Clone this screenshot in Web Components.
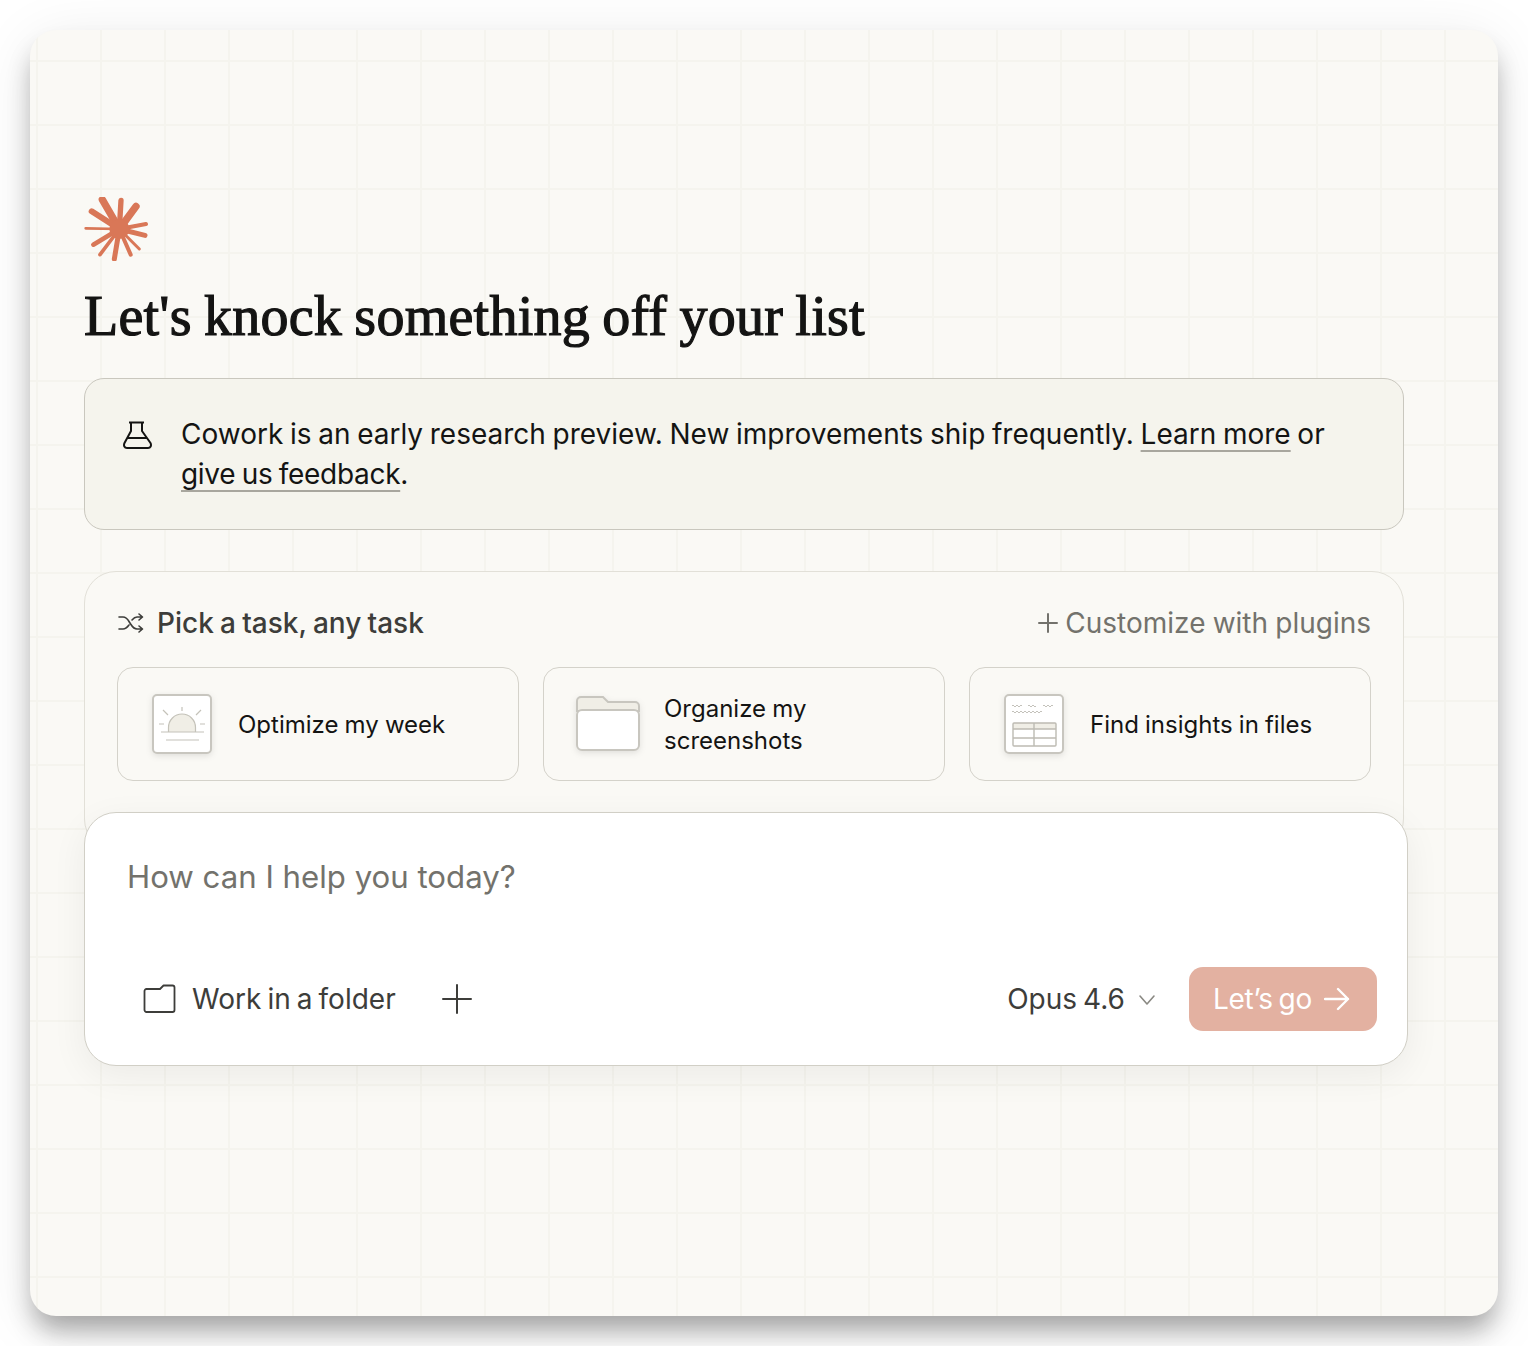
<!DOCTYPE html>
<html lang="en">
<head>
<meta charset="utf-8">
<title>Cowork</title>
<style>
  html, body { margin: 0; background: #fff; }
  body { padding-bottom: 30px; overflow: hidden; font-family: Inter, "Liberation Sans", sans-serif; }
</style>
</head>
<body>
<cw-window>
  <cw-burst></cw-burst>
  <cw-heading>Let's knock something off your list</cw-heading>
  <cw-banner>Cowork is an early research preview. New improvements ship frequently. <a>Learn more</a> or <a>give us feedback</a>.</cw-banner>
  <cw-tasks>
    <cw-task-card icon="sun">Optimize my week</cw-task-card>
    <cw-task-card icon="folder">Organize my<br>screenshots</cw-task-card>
    <cw-task-card icon="sheet">Find insights in files</cw-task-card>
  </cw-tasks>
  <cw-prompt></cw-prompt>
</cw-window>

<script>
const FONT = 'Inter, "Liberation Sans", sans-serif';

class CwWindow extends HTMLElement {
  constructor() {
    super();
    this.attachShadow({mode: 'open'}).innerHTML = `
      <style>
        :host {
          display: block;
          box-sizing: border-box;
          width: 1468px;
          height: 1286px;
          margin: 30px 30px 0;
          padding: 163px 94px 0 54px;
          border-radius: 26px;
          color: #141413;
          background-color: #faf9f5;
          background-image:
            linear-gradient(90deg, #f5f4ee 2px, transparent 2px),
            linear-gradient(#f5f4ee 2px, transparent 2px);
          background-size: 64px 64px;
          background-position: 6px 30px;
          box-shadow: 0 18px 26px -4px rgba(0, 0, 0, .32), 0 10px 60px rgba(0, 0, 0, .09);
        }
      </style>
      <slot></slot>
    `;
  }
}

class CwBurst extends HTMLElement {
  constructor() {
    super();
    // rays measured from the reference, center to tip
    const rays = [
      [97, 60, 22], [153, 62, 16], [198, 80, 22], [228, 133, 12], [225, 167, 15], [208, 208, 9],
      [182, 225, 12], [133, 238, 15], [90, 225, 11], [70, 195, 14], [47, 146, 8], [65, 95, 18]
    ];
    const lines = rays.map(([x, y, w]) => `<line x1="148" y1="148" x2="${x}" y2="${y}" stroke-width="${w}"/>`).join('');
    this.attachShadow({mode: 'open'}).innerHTML = `
      <style>
        :host { display: block; width: 64px; height: 64px; margin-top: 4px; }
        svg { display: block; }
      </style>
      <svg width="64" height="64" viewBox="42 52 192 192" fill="none" stroke="#d97757" stroke-linecap="round">
        ${lines}
        <circle cx="148" cy="148" r="30" fill="#d97757" stroke="none"/>
      </svg>
    `;
  }
}

class CwHeading extends HTMLElement {
  constructor() {
    super();
    this.attachShadow({mode: 'open'}).innerHTML = `
      <style>
        :host {
          display: block;
          margin: 22px 0 29px;
          font: 400 56px/66px "Liberation Serif", serif;
          letter-spacing: .25px;
          word-spacing: -2px;
          -webkit-text-stroke: 1.200px #141413;
          color: #141413;
        }
      </style>
      <slot></slot>
    `;
  }
}

class CwBanner extends HTMLElement {
  constructor() {
    super();
    this.attachShadow({mode: 'open'}).innerHTML = `
      <style>
        :host {
          display: flex;
          box-sizing: border-box;
          gap: 28px;
          height: 152px;
          padding: 35px 32px 0 38px;
          border: 1px solid #c9c7be;
          border-radius: 20px;
          background: #f5f4ed;
          font: 400 28px/40px ${FONT};
          word-spacing: -1.200px;
          color: #141413;
        }
        svg { flex: none; margin-top: 7px; }
        ::slotted(a) {
          text-decoration: underline 2px #a8a69e;
          text-underline-offset: 6px;
        }
        ::slotted(a:last-of-type) { letter-spacing: -.3px; }
      </style>
      <svg width="30" height="30" viewBox="0 0 30 30" fill="none" stroke="#141413" stroke-width="2" stroke-linejoin="round">
        <path d="M6 1.500h15M8 1.500V10L1.500 22c-1.200 2.500 0 5 2.500 5h21c2.500 0 3.700-2.500 2.500-5L19 10V1.500M4.500 17h20"/>
      </svg>
      <div><slot></slot></div>
    `;
  }
}

class CwTasks extends HTMLElement {
  constructor() {
    super();
    this.attachShadow({mode: 'open'}).innerHTML = `
      <style>
        :host {
          display: block;
          box-sizing: border-box;
          height: 280px;
          margin-top: 41px;
          padding: 31px 32px 0;
          border: 1px solid #e2e0d8;
          border-radius: 32px;
          background: #faf9f5;
        }
        .head {
          display: flex;
          align-items: center;
          height: 40px;
          margin-bottom: 24px;
          font: 500 28px/40px ${FONT};
          word-spacing: -1.250px;
          color: #3d3d3a;
        }
        .head svg { flex: none; }
        .shuffle { margin: 0 13px 0 1px; }
        .custom { display: flex; align-items: center; gap: 7px; margin-left: auto; font-weight: 400; word-spacing: -.7px; color: #73726c; }
      </style>
      <div class="head">
        <svg class="shuffle" width="26" height="22" viewBox="0 0 26 22" fill="none" stroke="#3d3d3a" stroke-width="1.600" stroke-linecap="round" stroke-linejoin="round">
          <path d="M1 5h4c4 0 5 3 7 6s3 6 7 6h5M1 17h4c3 0 4.500-2 6-4M14 8c1.500-1.800 2.800-3 5-3h5M21 2l3.500 3L21 8M21 14l3.500 3L21 20"/>
        </svg>
        <span>Pick a task, any task</span>
        <span class="custom">
          <svg width="20" height="20" viewBox="0 0 20 20" stroke="#73726c" stroke-width="2" stroke-linecap="round"><path d="M10 1v18M1 10h18"/></svg>
          <span>Customize with plugins</span>
        </span>
      </div>
      <cw-task-grid><slot></slot></cw-task-grid>
    `;
  }
}

class CwTaskGrid extends HTMLElement {
  constructor() {
    super();
    this.attachShadow({mode: 'open'}).innerHTML = `
      <style>
        :host { display: grid; grid-template-columns: repeat(3, 1fr); gap: 24px; }
      </style>
      <slot></slot>
    `;
  }
}

const TASK_ICONS = {
  sun: `<svg width="62" height="62" viewBox="0 0 62 62" fill="none" stroke="#c4c2b9">
      <rect x="2" y="2" width="58" height="58" rx="4" fill="#fff" stroke="#c8c6bf" stroke-width="2"/>
      <path d="M17.500 39v-4.500a13.500 13.500 0 0 1 27 0V39z" fill="#f0eee6" stroke="none"/>
      <path d="M17.500 39v-4.500a13.500 13.500 0 0 1 27 0V39M10 39h43M15 47h33M31 14v4M12 17l5 5M50 17l-5 5M8 31h5M49 31h5" stroke-width="1.200"/>
    </svg>`,
  folder: `<svg width="66" height="58" viewBox="0 0 66 58" fill="none" stroke="#c8c6bf" stroke-width="2">
      <path d="M2 16V6a4 4 0 0 1 4-4h22l5 5h27a4 4 0 0 1 4 4v5z" fill="#f0eee6"/>
      <rect x="2" y="15" width="62" height="40" rx="5" fill="#fff"/>
    </svg>`,
  sheet: `<svg width="62" height="62" viewBox="0 0 62 62" fill="none" stroke="#bdbbb3">
      <rect x="2" y="2" width="58" height="58" rx="4" fill="#fff" stroke="#c8c6bf" stroke-width="2"/>
      <path d="M9 13q1-2 2 0t2 0 2 0 2 0 2 0M25 13q1-2 2 0t2 0 2 0 2 0M40 13q1-2 2 0t2 0 2 0 2 0 2 0M9 19q1-2 2 0t2 0 2 0 2 0 2 0 2 0 2 0 2 0 2 0 2 0 2 0 2 0 2 0 2 0 2 0" stroke-width=".9"/>
      <rect x="10" y="30" width="43" height="6" fill="#f0eee6" stroke="none"/>
      <rect x="10" y="30" width="43" height="23" rx="1" stroke-width="1.400"/>
      <path d="M10 36h43M10 45h43M31 30v23" stroke-width="1.400"/>
    </svg>`
};

class CwTaskCard extends HTMLElement {
  constructor() {
    super();
    const icon = TASK_ICONS[this.getAttribute('icon')];
    this.attachShadow({mode: 'open'}).innerHTML = `
      <style>
        :host {
          display: block;
          box-sizing: border-box;
          height: 114px;
          border: 1px solid #d4d2ca;
          border-radius: 16px;
          background: #faf9f5;
          font: 400 24px/32px ${FONT};
          word-spacing: -.6px;
          color: #141413;
        }
        .row { display: flex; align-items: center; height: 100%; }
        .icon { display: flex; justify-content: center; width: 62px; margin: 0 25px 0 33px; }
        .text { padding-top: 2px; }
        svg { display: block; filter: drop-shadow(0 2px 3px rgba(0, 0, 0, .1)); flex: none; }
      </style>
      <div class="row">
        <div class="icon">${icon}</div>
        <div class="text"><slot></slot></div>
      </div>
    `;
  }
}

class CwPrompt extends HTMLElement {
  constructor() {
    super();
    this.attachShadow({mode: 'open'}).innerHTML = `
      <style>
        :host {
          display: flex;
          flex-direction: column;
          box-sizing: border-box;
          position: relative;
          width: 1324px;
          height: 254px;
          margin-top: -39px;
          padding: 44px 30px 34px 42px;
          border: 1px solid #d1cfc6;
          border-radius: 32px;
          background: #fff;
          box-shadow: 0 10px 36px rgba(0, 0, 0, .06);
          font: 400 28px/40px ${FONT};
          word-spacing: -1.800px;
          color: #3d3d3a;
        }
        .placeholder { font-size: 31.200px; word-spacing: 0; color: #73726c; }
        .foot { display: flex; align-items: center; margin-top: auto; height: 64px; }
        .folder { margin: 0 15px 0 16px; }
        .plus { margin-left: 46px; }
        .model { margin-left: auto; }
        .chev { margin: 2px 33px 0 13px; }
        .go {
          display: flex;
          align-items: center;
          gap: 12px;
          box-sizing: border-box;
          width: 188px;
          height: 64px;
          padding-left: 24px;
          border-radius: 14px;
          background: #e3b1a1;
          color: #fff;
          letter-spacing: -.3px;
        }
      </style>
      <div class="placeholder">How can I help you today?</div>
      <div class="foot">
        <svg class="folder" width="34" height="30" viewBox="0 0 34 30" fill="none" stroke="#3d3d3a" stroke-width="1.800" stroke-linejoin="round">
          <path d="M1.500 7a2 2 0 0 1 2-2H17l3.500-3.500H29.500a2 2 0 0 1 2 2V26a2 2 0 0 1-2 2h-26a2 2 0 0 1-2-2z"/>
        </svg>
        <span>Work in a folder</span>
        <svg class="plus" width="30" height="30" viewBox="0 0 30 30" stroke="#3d3d3a" stroke-width="2" stroke-linecap="round">
          <path d="M15 1v28M1 15h28"/>
        </svg>
        <span class="model">Opus 4.6</span>
        <svg class="chev" width="18" height="12" viewBox="0 0 18 12" fill="none" stroke="#8a8983" stroke-width="1.600" stroke-linecap="round" stroke-linejoin="round">
          <path d="M2 2l7 8 7-8"/>
        </svg>
        <div class="go">
          <span>Let’s go</span>
          <svg width="26" height="24" viewBox="0 0 26 24" fill="none" stroke="#fff" stroke-width="2.400" stroke-linecap="round" stroke-linejoin="round">
            <path d="M1 12h23M14 2l10 10-10 10"/>
          </svg>
        </div>
      </div>
    `;
  }
}

customElements.define('cw-window', CwWindow);
customElements.define('cw-burst', CwBurst);
customElements.define('cw-heading', CwHeading);
customElements.define('cw-banner', CwBanner);
customElements.define('cw-task-grid', CwTaskGrid);
customElements.define('cw-tasks', CwTasks);
customElements.define('cw-task-card', CwTaskCard);
customElements.define('cw-prompt', CwPrompt);
</script>
</body>
</html>
